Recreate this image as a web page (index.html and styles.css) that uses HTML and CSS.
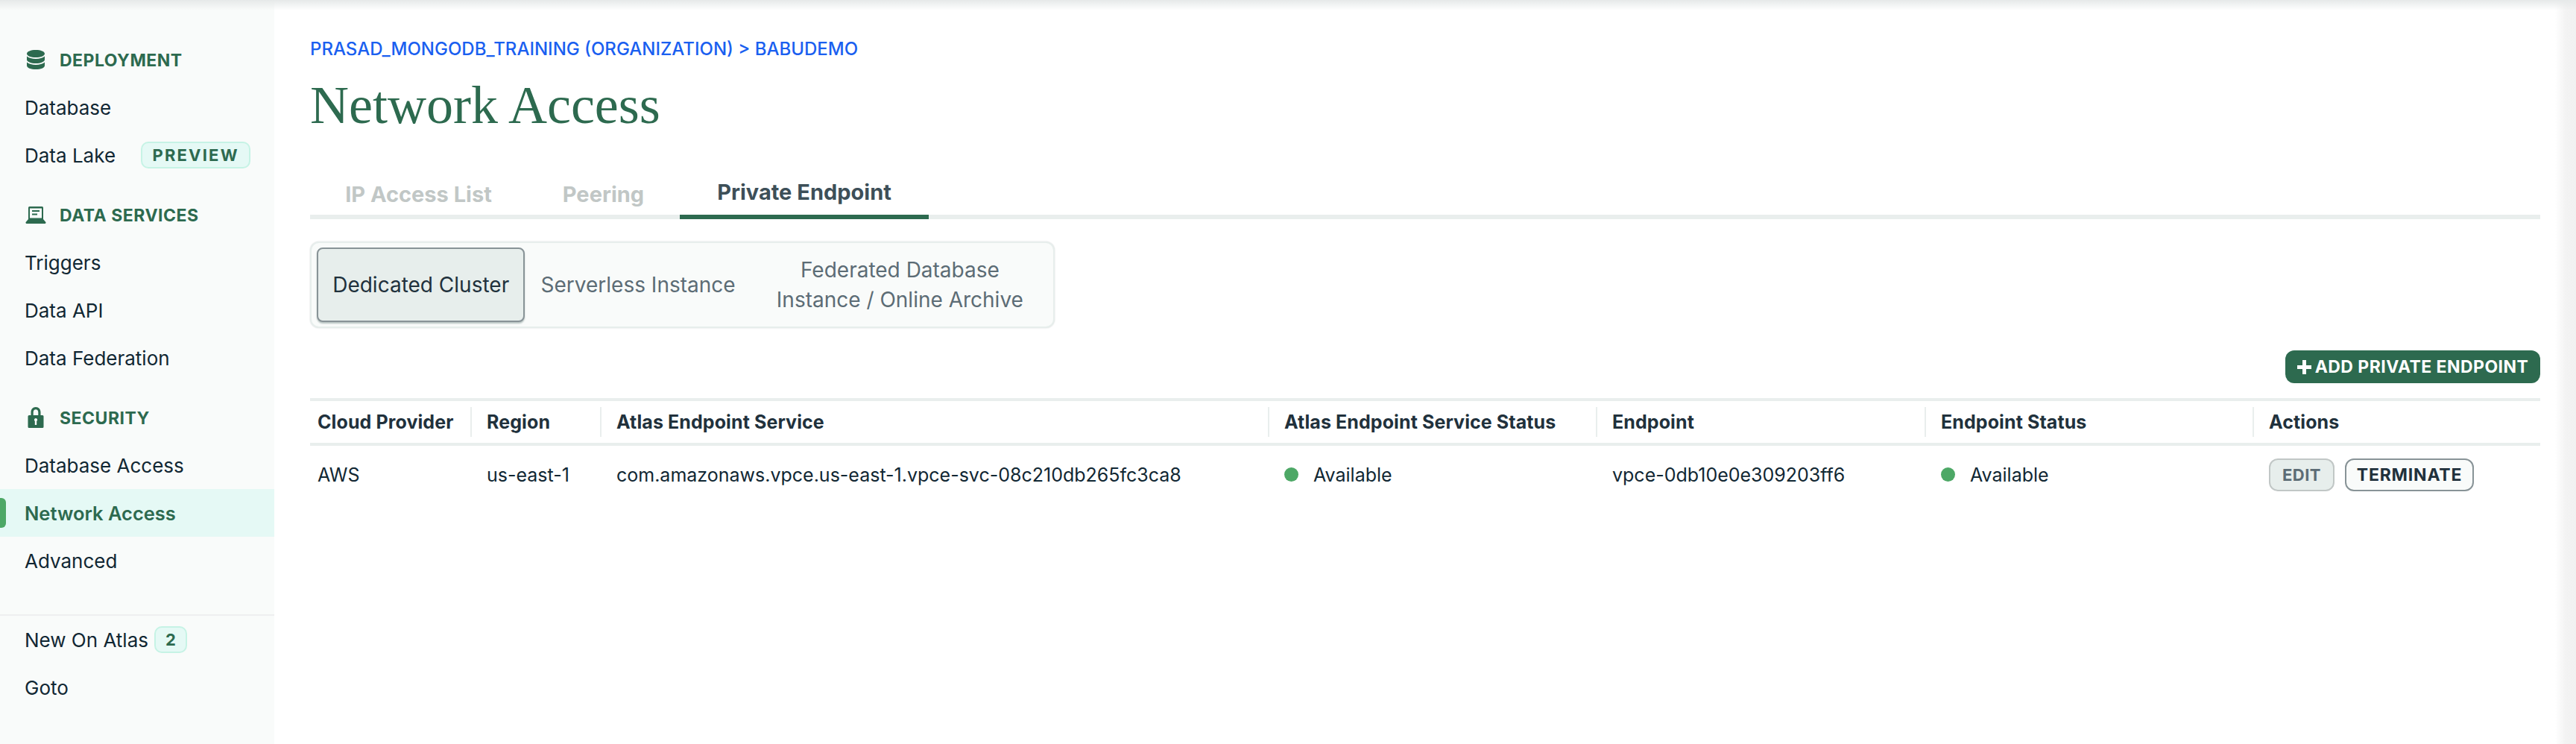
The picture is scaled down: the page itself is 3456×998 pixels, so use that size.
FILE: index.html
```html
<!DOCTYPE html>
<html>
<head>
    <title>Network Access</title>
    <link rel="stylesheet" href="styles.css">
</head>
<body>
    <div class="topShade"></div>
    <div class="app">
        <nav class="sidebar">
            <div class="navGroup">
                <div class="navHead">
                    <svg class="navIcon" viewBox="0 0 28 28"><path d="M14 1c6.600 0 12 2 12 5s-5.400 5-12 5S2 9 2 6s5.400-5 12-5zM2 9.500c2.500 2.300 7 3.500 12 3.500s9.500-1.200 12-3.500V14c0 2.900-5.400 5-12 5S2 16.900 2 14zM2 17.500c2.500 2.300 7 3.500 12 3.500s9.500-1.200 12-3.500V22c0 3-5.400 5-12 5S2 25 2 22z"/></svg>
                    <span class="navLabel">DEPLOYMENT</span>
                </div>
                <a class="navItem">Database</a>
                <a class="navItem">Data Lake <span class="tag tagPreview">PREVIEW</span></a>
            </div>
            <div class="navGroup">
                <div class="navHead">
                    <svg class="navIcon" viewBox="0 0 28 28"><path fill-rule="evenodd" d="M4 4.500A1.500 1.500 0 0 1 5.500 3h17A1.500 1.500 0 0 1 24 4.500V20l3.400 4c.4.900-.1 2-1 2H1.600c-.9 0-1.400-1.100-1-2L4 20zM6 5.500V18.500h16V5.500zM9 8h10v2H9zM9 12.500h7v2H9z"/></svg>
                    <span class="navLabel">DATA SERVICES</span>
                </div>
                <a class="navItem">Triggers</a>
                <a class="navItem">Data API</a>
                <a class="navItem">Data Federation</a>
            </div>
            <div class="navGroup">
                <div class="navHead">
                    <svg class="navIcon" viewBox="0 0 28 28"><path fill-rule="evenodd" d="M14 0c4 0 6.500 3 6.500 7v4H23a1.500 1.500 0 0 1 1.500 1.500v14A1.500 1.500 0 0 1 23 28H5a1.500 1.500 0 0 1-1.500-1.500v-14A1.500 1.500 0 0 1 5 11h2.500V7c0-4 2.500-7 6.500-7zm0 3.200c-2 0-3.300 1.600-3.300 3.800v4h6.600V7c0-2.200-1.300-3.800-3.300-3.800zM14 15a2.200 2.200 0 0 0-1.200 4v5h2.400v-5A2.200 2.200 0 0 0 14 15z"/></svg>
                    <span class="navLabel">SECURITY</span>
                </div>
                <a class="navItem">Database Access</a>
                <a class="navItem navActive">Network Access</a>
                <a class="navItem">Advanced</a>
            </div>
            <div class="navFooter">
                <a class="navItem">New On Atlas <span class="tag tagCount">2</span></a>
                <a class="navItem">Goto</a>
            </div>
        </nav>
        <main class="content">
            <div class="breadcrumb">PRASAD_MONGODB_TRAINING (ORGANIZATION) &gt; BABUDEMO</div>
            <h1 class="pageTitle">Network Access</h1>
            <div class="tabs">
                <a class="tab tabOff">IP Access List</a>
                <a class="tab tabOff">Peering</a>
                <a class="tab tabOn">Private Endpoint</a>
            </div>
            <div class="segmented">
                <button class="segment segDedicated segOn">Dedicated Cluster</button>
                <button class="segment segServerless">Serverless Instance</button>
                <button class="segment segFederated">Federated Database Instance / Online Archive</button>
            </div>
            <div class="toolbar">
                <button class="addBtn">
                    <svg class="plus" viewBox="0 0 19 19"><path d="M7 0h5v7h7v5h-7v7H7v-7H0V7h7z"/></svg>
                    ADD PRIVATE ENDPOINT
                </button>
            </div>
            <table class="endpoints">
                <thead>
                    <tr>
                        <th class="colCloud"><div class="thFirst">Cloud Provider</div></th>
                        <th class="colRegion"><div class="thInner">Region</div></th>
                        <th class="colService"><div class="thInner">Atlas Endpoint Service</div></th>
                        <th class="colStatus"><div class="thInner">Atlas Endpoint Service Status</div></th>
                        <th class="colEndpoint"><div class="thInner">Endpoint</div></th>
                        <th class="colStatus"><div class="thInner">Endpoint Status</div></th>
                        <th><div class="thInner">Actions</div></th>
                    </tr>
                </thead>
                <tbody>
                    <tr>
                        <td class="tdFirst">AWS</td>
                        <td>us-east-1</td>
                        <td>com.amazonaws.vpce.us-east-1.vpce-svc-08c210db265fc3ca8</td>
                        <td><span class="dot"></span>Available</td>
                        <td>vpce-0db10e0e309203ff6</td>
                        <td><span class="dot"></span>Available</td>
                        <td>
                            <div class="actions">
                                <button class="smallBtn btnEdit">EDIT</button>
                                <button class="smallBtn btnTerminate">TERMINATE</button>
                            </div>
                        </td>
                    </tr>
                </tbody>
            </table>
        </main>
    </div>
    <div class="scrollEdge"></div>
</body>
</html>
```

FILE: styles.css
```css
* {
    box-sizing: border-box;
}
html, body {
    margin: 0;
    height: 100%;
    overflow: hidden;
}
body {
    font-family: Inter, "Liberation Sans", sans-serif;
    font-size: 26px;
    color: #112733;
    background: #fff;
}
.topShade {
    position: absolute;
    top: 0;
    left: 0;
    right: 0;
    height: 14px;
    background: linear-gradient(#e6e9e9, rgba(255, 255, 255, 0));
    z-index: 2;
}
.scrollEdge {
    position: absolute;
    top: 0;
    right: 0;
    bottom: 0;
    width: 28px;
    background: linear-gradient(90deg, #fff, #f3f3f3 50%, #f1f1f1);
}
.app {
    display: flex;
    height: 100%;
}

/* sidebar */
.sidebar {
    width: 368px;
    flex-shrink: 0;
    padding-top: 48px;
    background: #f9fbfa;
}
.navGroup {
    margin-bottom: 16px;
}
.navHead {
    display: flex;
    align-items: center;
    height: 64px;
    padding-left: 34px;
    font-size: 23px;
    font-weight: 700;
    letter-spacing: 0.5px;
    color: #2d6a4f;
}
.navLabel {
    margin-left: -1px;
    padding-top: 1px;
}
.navIcon {
    width: 28px;
    height: 28px;
    margin-right: 19px;
    fill: #2d6a4f;
}
.navItem {
    position: relative;
    display: flex;
    align-items: center;
    height: 64px;
    padding-left: 33px;
    color: #112733;
}
.navActive {
    background: #e5f9f5;
    color: #2d6a4f;
    font-weight: 600;
    font-size: 25.500px;
}
.navActive::before {
    content: "";
    position: absolute;
    left: 0;
    top: 12px;
    width: 8px;
    height: 40px;
    border-radius: 0 6px 6px 0;
    background: #4da866;
}
.navFooter {
    margin-top: 40px;
    border-top: 2px solid #eeeff0;
}
.tag {
    display: inline-block;
    height: 36px;
    line-height: 32px;
    border: 2px solid #c6f3e5;
    border-radius: 10px;
    background: #e5f9f5;
    color: #2d6a4f;
    font-size: 22px;
    font-weight: 700;
    text-align: center;
}
.tagPreview {
    width: 147px;
    margin-left: 34px;
    letter-spacing: 2.2px;
}
.tagCount {
    width: 44px;
    margin-left: 8px;
}

/* main */
.content {
    flex: 1;
    padding: 48px 48px 0;
    min-width: 0;
}
.breadcrumb {
    height: 36px;
    line-height: 36px;
    font-size: 24px;
    font-weight: 500;
    color: #1a5ff0;
}
.pageTitle {
    margin: 21px 0 0;
    height: 72px;
    line-height: 72px;
    font-family: "Liberation Serif", serif;
    font-size: 72px;
    font-weight: 400;
    color: #2d6a4f;
}
.tabs {
    display: flex;
    margin-top: 49px;
    height: 68px;
    border-bottom: 6px solid #e9eeed;
}
.tab {
    display: flex;
    align-items: center;
    justify-content: center;
    height: 68px;
    font-weight: 700;
    font-size: 29px;
}
.tab:nth-child(1) {
    width: 291px;
}
.tab:nth-child(2) {
    width: 205px;
}
.tabOff {
    color: #c1c7c6;
}
.tabOn {
    width: 334px;
    color: #3d4f58;
    border-bottom: 6px solid #2d6a4f;
}
.segmented {
    display: flex;
    width: 999px;
    height: 116px;
    margin-top: 30px;
    padding: 6px 6px 6px 7px;
    border: 2px solid #e7eeec;
    border-radius: 12px;
    background: #f9fbfa;
    box-shadow: 0 0 2px #d4d8d8;
}
.segment {
    border: none;
    background: none;
    font: inherit;
    font-size: 28px;
    line-height: 40px;
    color: #5c6c75;
    padding: 0;
}
.segDedicated {
    width: 280px;
}
.segServerless {
    width: 304px;
}
.segFederated {
    width: 400px;
    padding: 0 30px;
}
.segOn {
    color: #21313c;
    background: #e7eeec;
    border: 2px solid #889397;
    border-radius: 8px;
    box-shadow: 0 2px 2px #b8c4c2;
}
.toolbar {
    display: flex;
    justify-content: flex-end;
    margin-top: 30px;
}
.addBtn {
    display: flex;
    align-items: center;
    justify-content: center;
    height: 44px;
    width: 342px;
    border: none;
    border-radius: 12px;
    background: #2d6a4f;
    color: #fff;
    font: inherit;
    font-size: 23px;
    font-weight: 700;
    letter-spacing: 0.45px;
}
.plus {
    width: 19px;
    height: 19px;
    margin-right: 5px;
    fill: #fff;
}

/* table */
.endpoints {
    width: 100%;
    margin-top: 20px;
    border-collapse: collapse;
    table-layout: fixed;
}
.endpoints th {
    height: 60px;
    padding: 0;
    border-top: 4px solid #e9eeed;
    border-bottom: 4px solid #e9eeed;
    text-align: left;
    font-size: 25px;
    font-weight: 700;
    letter-spacing: 0.1px;
    color: #21313c;
}
.thFirst, .thInner {
    display: flex;
    align-items: center;
    height: 40px;
}
.thFirst {
    padding-left: 10px;
}
.thInner {
    padding-left: 20px;
    border-left: 2px solid #e9eeed;
}
.colCloud {
    width: 215px;
}
.colRegion {
    width: 174px;
}
.colService {
    width: 896px;
}
.colStatus {
    width: 440px;
}
.colEndpoint {
    width: 441px;
}
.endpoints td {
    height: 80px;
    padding: 0 0 0 22px;
    font-size: 25px;
    color: #112733;
}
.endpoints .tdFirst {
    padding-left: 10px;
}
.dot {
    display: inline-block;
    width: 19px;
    height: 19px;
    margin-right: 20px;
    border-radius: 50%;
    background: #4da866;
}
.actions {
    display: flex;
    gap: 14px;
}
.smallBtn {
    height: 44px;
    padding: 0;
    border-radius: 12px;
    border: 2px solid #889397;
    background: #f9fbfa;
    color: #21313c;
    font: inherit;
    font-size: 23px;
    font-weight: 700;
    letter-spacing: 0.8px;
}
.btnEdit {
    width: 88px;
    font-size: 22px;
    letter-spacing: 0.5px;
    border-color: #c1c7c6;
    background: #e7eeec;
    color: #5c6c75;
}
.btnTerminate {
    width: 173px;
}
```
